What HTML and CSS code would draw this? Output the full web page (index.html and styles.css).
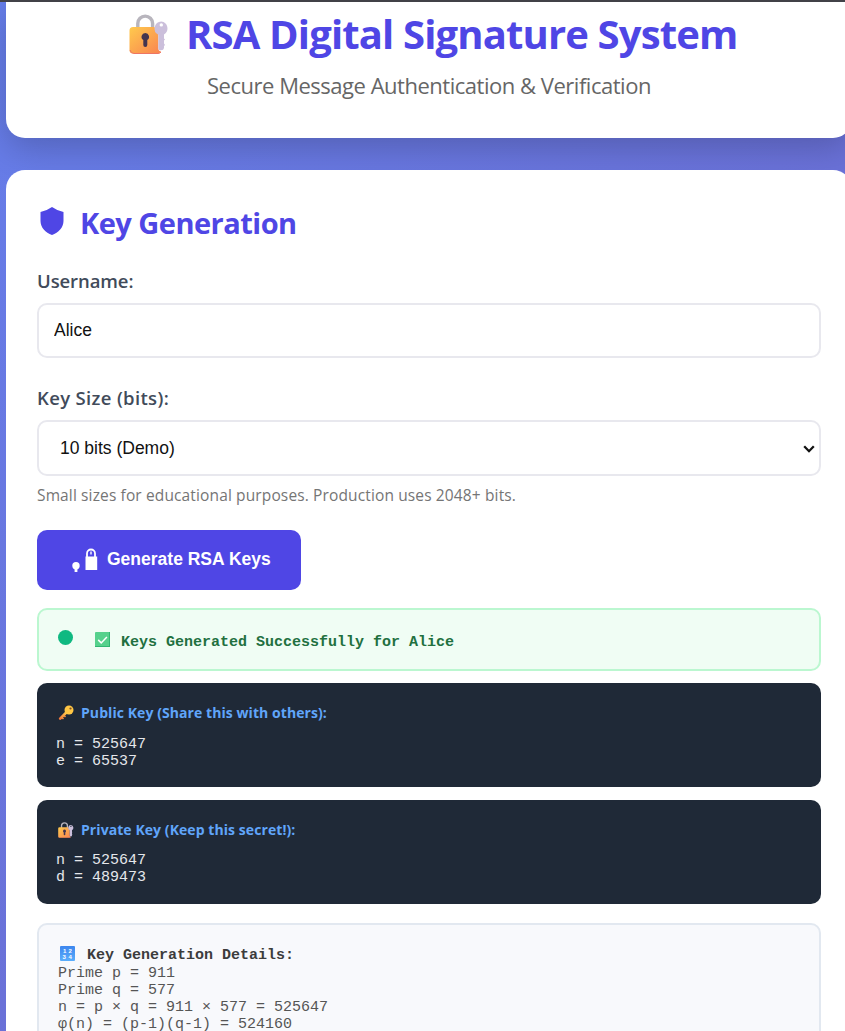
FILE: index.html
```html
<!DOCTYPE html>
<html lang="en">
<head>
<meta charset="utf-8">
<title>RSA Digital Signature System</title>
<link rel="stylesheet" href="styles.css">
</head>
<body>
<svg class="defs" width="0" height="0" aria-hidden="true">
  <defs>
    <linearGradient id="gold" x1="0" y1="0" x2="1" y2="1"><stop offset="0" stop-color="#ffca4d"/><stop offset="1" stop-color="#f98350"/></linearGradient>
    <linearGradient id="keygold" x1="1" y1="0" x2="0" y2="1"><stop offset="0" stop-color="#ffd94f"/><stop offset="1" stop-color="#f5793b"/></linearGradient>
    <linearGradient id="blue" x1="0" y1="0" x2="0" y2="1"><stop offset="0" stop-color="#3d86ee"/><stop offset="1" stop-color="#5aaefc"/></linearGradient>
  </defs>
  <symbol id="lockkey" viewBox="0 0 40 40">
    <path d="M8.800 15V9.500a7.400 7.400 0 0 1 14.800 0V15" fill="none" stroke="#b8b5bd" stroke-width="3.400"/>
    <path d="M4 13h21.500q.5 3.500 3.800 6.500V34q0 3 2.700 3.500-1 2-3.500 2H4q-3.500 0-3.500-3.500V16.500Q.5 13 4 13z" fill="url(#gold)"/>
    <path d="M1 36q1 3.500 4 3.500h24q2 0 3-1.500" fill="none" stroke="#ee7564" stroke-width="1"/>
    <path d="M16.300 19a3.800 3.800 0 0 0-2 7v5a2 2 0 0 0 4 0v-5a3.800 3.800 0 0 0-2-7z" fill="#44354f"/>
    <path fill-rule="evenodd" d="M32.300 7.500a7 7 0 0 0-3 13.200V34q0 2.300 2.700 2.300t3-2.300v-2l1-1-1-1.500v-3l1-1-1-1v-4a7 7 0 0 0-2.700-13zm0 1.700a1.700 1.700 0 1 1 0 3.400 1.700 1.700 0 0 1 0-3.400z" fill="#cbbfdb"/>
  </symbol>
</svg>
<div class="topline"></div>
<header class="header">
  <h1 class="title"><svg class="title-icon" viewBox="0 0 40 40"><use href="#lockkey"/></svg><span class="title-text">RSA Digital Signature System</span></h1>
  <p class="subtitle"><span class="subtitle-text">Secure Message Authentication &amp; Verification</span></p>
</header>
<main class="card">
  <h2 class="heading"><svg class="shield" viewBox="0 0 24 28"><path d="M12 0Q17 3.600 23.500 5V14C23.500 20.500 18.500 25.500 12 28C5.500 25.500.500 20.500.500 14V5Q7 3.600 12 0Z" fill="#4f46e5"/></svg><span class="heading-text">Key Generation</span></h2>
  <label class="label label-user" for="user">Username:</label>
  <input class="field" id="user" type="text" value="Alice">
  <label class="label label-size" for="size">Key Size (bits):</label>
  <div class="field select" id="size"><span>10 bits (Demo)</span><svg class="chevron" viewBox="0 0 12 8"><path d="M1.200 1.300L6 6.200l4.800-4.900" fill="none" stroke="#111" stroke-width="2.300"/></svg></div>
  <p class="hint">Small sizes for educational purposes. Production uses 2048+ bits.</p>
  <button class="button" type="button">
    <svg class="button-icon" viewBox="0 0 26 26"><g fill="#fff"><circle cx="4" cy="18.700" r="3.700"/><path d="M2.600 20h2.800v5H2.600z"/><path d="M13.500 9.500h11.700v13.500H13.500z"/></g><path d="M15 10V6.500a4 4 0 0 1 8 0V10" fill="none" stroke="#fff" stroke-width="1.800"/><path d="M19 4.500v3" stroke="#fff" stroke-width="1.400"/></svg>
    <span>Generate RSA Keys</span>
  </button>
  <div class="status">
    <span class="dot"></span>
    <svg class="check" viewBox="0 0 15 15"><rect width="15" height="15" rx="1" fill="#56d18c"/><path d="M0 14.500h15M14.500 0v15" stroke="#31b773" stroke-width="1"/><path d="M3.200 7.900l3 3 5.700-6" fill="none" stroke="#fff" stroke-width="1.500"/></svg>
    <span class="status-text">Keys Generated Successfully for Alice</span>
  </div>
  <section class="key">
    <h3 class="key-title"><svg class="key-icon" viewBox="0 0 16 16"><path d="M2.200 13.600L9.300 6.500" stroke="url(#keygold)" stroke-width="2.700" stroke-linecap="round"/><path d="M4 12.500l1.500 1.500M6 10.500l1.500 1.500" stroke="#f99340" stroke-width="1.500"/><circle cx="11" cy="5" r="4.500" fill="#ffc644"/><circle cx="12.500" cy="3.500" r="1.100" fill="#7a4e28"/></svg><span class="public-text">Public Key (Share this with others):</span></h3>
    <pre class="values">n = 525647
e = 65537</pre>
  </section>
  <section class="key key-private">
    <h3 class="key-title"><svg class="key-icon" viewBox="0 0 40 40"><use href="#lockkey"/></svg><span class="private-text">Private Key (Keep this secret!):</span></h3>
    <pre class="values">n = 525647
d = 489473</pre>
  </section>
  <section class="details">
    <h3 class="details-title"><svg class="numbers" viewBox="0 0 15 15"><rect width="15" height="15" rx="1" fill="url(#blue)"/><g class="digits"><text x="3" y="6.500">1</text><text x="8.500" y="6.500">2</text><text x="2.500" y="13">3</text><text x="8.500" y="13">4</text></g></svg><span>Key Generation Details:</span></h3>
    <pre class="detail-lines">Prime p = 911
Prime q = 577
n = p × q = 911 × 577 = 525647
φ(n) = (p-1)(q-1) = 524160</pre>
  </section>
</main>
</body>
</html>
```
FILE: styles.css
```css
* { box-sizing: border-box; }
html { height: 1031px; overflow: hidden; }
body {
  margin: 0;
  display: flex;
  flex-direction: column;
  width: 845px;
  height: 1031px;
  overflow: hidden;
  background: linear-gradient(135deg, #667eea 0%, #764ba2 100%) 0 0 / 1400px 2600px;
  font-family: "Open Sans", "Noto Sans", sans-serif;
}
h1, h2, h3, p, pre { margin: 0; }
svg { flex: none; display: block; }
.defs { position: absolute; }
.topline { flex: none; height: 2px; background: #45454b; }
.header {
  flex: none;
  width: 846px;
  height: 136px;
  margin-left: 6px;
  padding-top: 6px;
  border-radius: 0 0 19px 19px;
  background: #fff;
  box-shadow: 0 10px 34px rgba(0, 0, 0, .2);
}
.title {
  display: flex;
  padding-left: 122px;
  height: 52px;
  font-size: 40px;
  line-height: 51px;
  letter-spacing: -.85px;
  color: #4f46e5;
  white-space: nowrap;
}
.title-icon { width: 40px; height: 40px; margin: 6px 20px 0 1px; }
.title-text { margin-left: -3px; }
.subtitle { padding: 10px 0 0 201px; font-size: 22px; line-height: 30px; letter-spacing: -.48px; color: #666; white-space: nowrap; }
.card {
  flex: 1;
  min-height: 0;
  overflow: hidden;
  width: 846px;
  margin: 32px 0 0 6px;
  padding: 34px 31px 0;
  border-radius: 19px 19px 0 0;
  background: #fff;
}
.heading {
  display: flex;
  height: 40px;
  font-size: 29px;
  line-height: 38px;
  letter-spacing: -.52px;
  color: #4f46e5;
  white-space: nowrap;
}
.shield { width: 24px; height: 28px; margin: 3px 16px 0 3px; }
.label {
  display: block;
  height: 26px;
  font-size: 18.500px;
  font-weight: 600;
  line-height: 26px;
  color: #414b5a;
}
.label-user { margin: 24px 0 9px; letter-spacing: -.1px; }
.label-size { margin: 27px 0 9px; letter-spacing: .34px; }
.field {
  display: block;
  width: 784px;
  height: 55px;
  padding: 0 15px;
  border: 2px solid #e8e8ee;
  border-radius: 10px;
  background: #fff;
  font: 17.500px "Liberation Sans", sans-serif;
  color: #111;
}
.select {
  display: flex;
  align-items: center;
  justify-content: space-between;
  height: 56px;
  padding: 0 4px 0 21px;
}
.chevron { width: 12px; height: 8px; margin-top: 1px; }
.hint { height: 24px; margin-top: 7px; font-size: 15.500px; line-height: 24px; letter-spacing: .13px; color: #757575; white-space: nowrap; }
.button {
  display: flex;
  align-items: center;
  width: 264px;
  height: 60px;
  margin-top: 23px;
  padding: 0 0 1px 35px;
  border: 0;
  border-radius: 10px;
  background: #4f46e5;
  color: #fff;
  font: bold 17.500px "Liberation Sans", sans-serif;
  white-space: nowrap;
}
.button-icon { width: 26px; height: 26px; margin: 0 9px 0 0; }
.status {
  display: flex;
  height: 63px;
  margin-top: 18px;
  padding: 0 19px;
  border: 2px solid #bbf7d0;
  border-radius: 10px;
  background: #f0fdf4;
  color: #22703f;
  font: bold 15px/65px "Liberation Mono", monospace;
}
.dot { width: 15px; height: 15px; margin: 20px 22px 0 0; border-radius: 50%; background: #10b981; }
.check { width: 15px; height: 15px; margin: 22px 11px 0 0; }
.key {
  height: 104px;
  margin-top: 12px;
  padding: 19px 19px 0;
  border-radius: 10px;
  background: #1f2937;
}
.key-private { margin-top: 13px; }
.key-title {
  display: flex;
  height: 22px;
  padding-left: 2px;
  font-size: 14px;
  line-height: 22px;
  letter-spacing: .07px;
  color: #60a5fa;
  white-space: nowrap;
}
.key-icon { width: 16px; height: 16px; margin: 3px 7px 0 0; }
.values { padding-top: 12px; color: #e5e7eb; font: 15px/17px "Liberation Mono", monospace; }
.key-private .values { padding-top: 11px; }
.details {
  height: 160px;
  margin-top: 19px;
  padding: 21px 19px 0;
  border: 2px solid #e2e8f0;
  border-radius: 10px;
  background: #f8f9fc;
  color: #555;
  font: 15px/17px "Liberation Mono", monospace;
}
.details-title { display: flex; height: 19px; font-size: 15px; line-height: 20px; color: #3c3c3c; }
.numbers { width: 15px; height: 15px; margin: 0 12px 0 2px; }
.digits { fill: #fff; font: bold 6px "Liberation Sans", sans-serif; }
.detail-lines { font: inherit; }
```
